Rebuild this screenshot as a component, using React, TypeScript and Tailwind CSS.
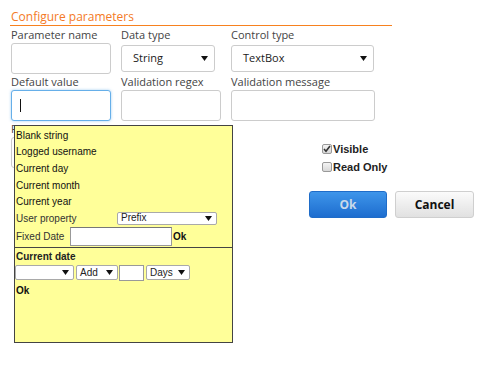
import React from "react"

const Arrow = () => (
  <svg width="7" height="5" viewBox="0 0 7 5" className="flex-shrink-0">
    <path d="M0 0h7L3.5 5z" fill="#111" />
  </svg>
)

function FakeSelect({ value, className }: { value: string; className: string }) {
  return (
    <div className={"flex items-center justify-between bg-white border border-[#ccc] rounded-[3px] pl-[11px] pr-[6px] text-[11px] text-[#222] " + className}>
      <span>{value}</span>
      <Arrow />
    </div>
  )
}

function MiniSelect({ value, className }: { value: string; className: string }) {
  return (
    <div className={"flex items-center justify-between bg-white border border-[#a9a9a9] rounded-[2px] pl-[3px] pr-[4px] text-[10px] leading-none text-[#222] " + className}>
      <span>{value}</span>
      <Arrow />
    </div>
  )
}

function Field({ label, children }: { label: string; children: React.ReactNode }) {
  return (
    <div className="flex flex-col">
      <div className="h-[14px] leading-[14px] text-[11px] text-[#444] whitespace-nowrap">{label}</div>
      <div className="h-[33px] pt-px">{children}</div>
    </div>
  )
}

const Input = () => <div className="h-[31px] bg-white border border-[#ccc] rounded-[3px]" />

function Check({ label, checked }: { label: string; checked?: boolean }) {
  return (
    <div className="flex items-center h-[14px] font-['Liberation_Sans',Arial,sans-serif] text-[11px] font-bold text-[#222]">
      <span className="w-[10px] h-[10px] border border-[#999] rounded-[2px] bg-gradient-to-b from-[#f4f4f4] to-[#d8d8d8] flex items-center justify-center mr-px">
        {checked && (
          <svg width="8" height="8" viewBox="0 0 8 8">
            <path d="M1 4l2 2.2L7 1" stroke="#333" strokeWidth="1.6" fill="none" />
          </svg>
        )}
      </span>
      {label}
    </div>
  )
}

const ITEMS = ["Blank string", "Logged username", "Current day", "Current month", "Current year"]

export default function App() {
  return (
    <div className="relative w-[485px] h-[376px] bg-white font-['Open_Sans',sans-serif] pt-[8px]">
      {/* Title */}
      <div className="ml-[10px] w-[382px] border-b border-[#f7811f] pl-px h-[18px] leading-[17px] text-[12px] text-[#f47a26]">
        Configure parameters
      </div>

      {/* Form grid */}
      <div className="grid grid-cols-[100px_100px_144px] gap-x-[10px] pl-[11px] mt-[2px]">
        <Field label="Parameter name"><Input /></Field>
        <Field label="Data type">
          <FakeSelect value="String" className="w-[94px] h-[27px] mt-[2px]" />
        </Field>
        <Field label="Control type">
          <FakeSelect value="TextBox" className="w-[143px] h-[27px] mt-[2px]" />
        </Field>

        <Field label="Default value">
          <div className="h-[31px] bg-white border border-[#66afe9] rounded-[3px] shadow-[0_0_3px_rgba(102,175,233,0.6)] flex items-center pl-[8px]">
            <span className="w-px h-[13px] bg-[#111]" />
          </div>
        </Field>
        <Field label="Validation regex"><Input /></Field>
        <Field label="Validation message"><Input /></Field>
      </div>

      {/* Row 3 */}
      <div className="flex pl-[11px]">
        <div className="w-[100px]">
          <Field label="Prefix"><Input /></Field>
        </div>
        <div className="ml-[198px] pt-[20px] flex flex-col">
          <div className="pl-[13px] flex flex-col gap-[4px]">
            <Check label="Visible" checked />
            <Check label="Read Only" />
          </div>
          <div className="flex gap-[8px] mt-[17px]">
            <button className="w-[78px] h-[27px] rounded-[3px] bg-gradient-to-b from-[#3e95ea] to-[#1d6dcf] border border-[#1f6cc8] text-[12px] font-bold text-[#c9d9ea]">
              Ok
            </button>
            <button className="w-[79px] h-[27px] rounded-[3px] bg-gradient-to-b from-[#fbfbfb] to-[#e1e1e1] border border-[#cfcfcf] text-[12px] font-bold text-[#111]">
              Cancel
            </button>
          </div>
        </div>
      </div>

      {/* Default value dropdown */}
      <div className="absolute left-[14px] top-[125px] w-[219px] h-[218px] bg-[#ffff99] border border-[#444] font-['Liberation_Sans',Arial,sans-serif] text-[10px] text-[#111] flex flex-col pt-px">
        {ITEMS.map((t) => (
          <div key={t} className="h-[16.6px] flex items-center pl-px">{t}</div>
        ))}
        <div className="h-[16.6px] flex items-center pl-px text-[#333]">
          <span className="w-[101px]">User property</span>
          <MiniSelect value="Prefix" className="w-[100px] h-[13px]" />
        </div>
        <div className="h-[21px] flex items-center pl-px text-[#333] border-b border-[#444]">
          <span className="w-[54px]">Fixed Date</span>
          <div className="w-[102px] h-[19px] bg-white border border-[#999] border-t-[#777]" />
          <span className="ml-px font-bold text-[#111]">Ok</span>
        </div>
        <div className="h-[17px] flex items-center pl-px font-bold text-[#222]">Current date</div>
        <div className="flex items-center h-[16px]">
          <MiniSelect value="" className="w-[59px] h-[15px]" />
          <MiniSelect value="Add" className="w-[42px] h-[15px] ml-[2px]" />
          <div className="w-[25px] h-[16px] bg-white border border-[#999] ml-[1px]" />
          <MiniSelect value="Days" className="w-[44px] h-[15px] ml-[2px]" />
        </div>
        <div className="h-[19px] flex items-center pl-px font-bold text-[#111]">Ok</div>
      </div>
    </div>
  )
}
